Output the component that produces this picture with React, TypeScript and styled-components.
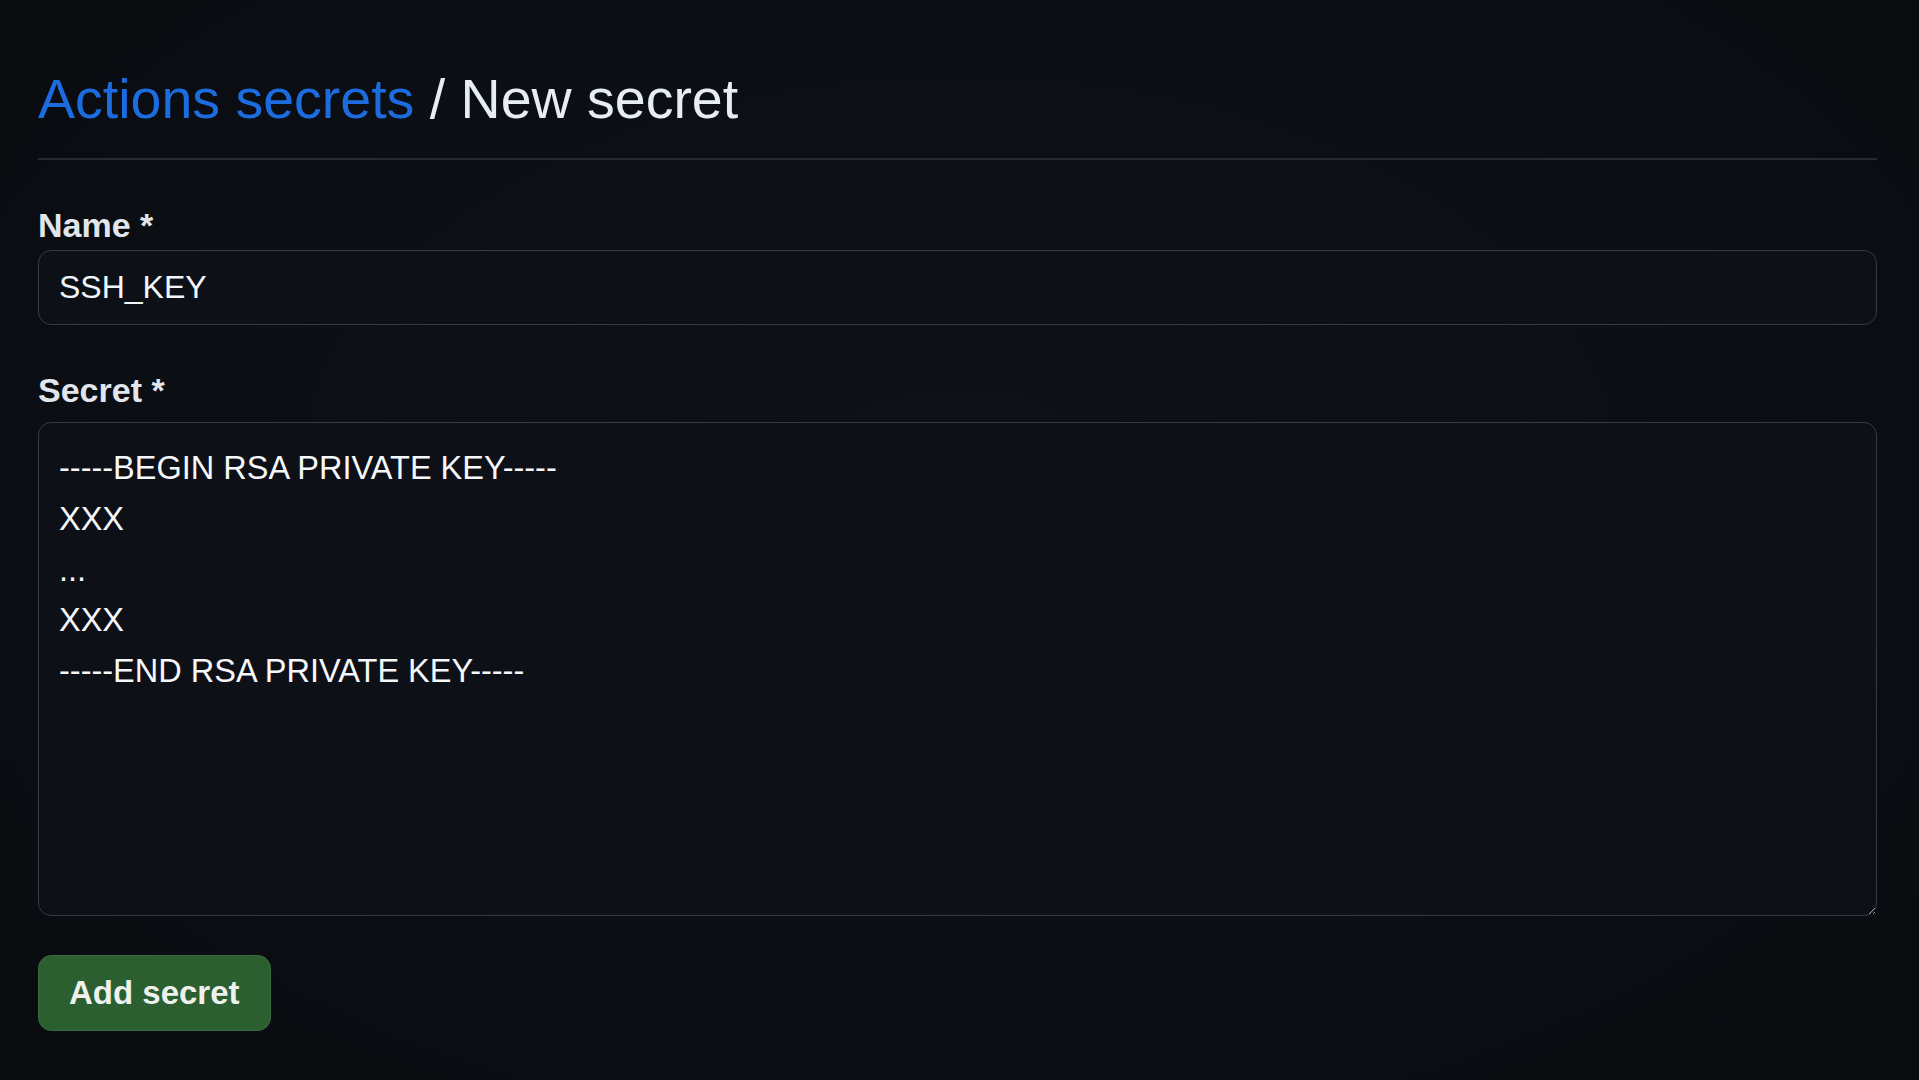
import React from 'react';
import styled, { createGlobalStyle } from 'styled-components';

const GlobalStyle = createGlobalStyle`
  html, body {
    margin: 0;
    padding: 0;
    background: #0b0e13;
  }

  body {
    font-family: "Liberation Sans", Arial, sans-serif;
    color: #e6edf3;
    color-scheme: dark;
  }
`;

const Page = styled.main`
  min-height: 100vh;
  box-sizing: border-box;
  padding: 65px 42px 40px 38px;
  background: radial-gradient(ellipse at 50% 45%, #0e1117 0%, #0b0e13 60%, #090b0f 100%);
`;

const Header = styled.div`
  padding-bottom: 25px;
  border-bottom: 2px solid #262b32;
`;

const Title = styled.h1`
  margin: 0;
  font-size: 55.5px;
  font-weight: 400;
  line-height: 68px;
  color: #e6edf3;
`;

const Crumb = styled.a`
  color: #1c6ce0;
  text-decoration: none;
`;

const Form = styled.form`
  display: flex;
  flex-direction: column;
  align-items: stretch;
`;

const Field = styled.div<{ $top: number }>`
  display: flex;
  flex-direction: column;
  margin-top: ${(p) => p.$top}px;
`;

const Label = styled.label<{ $gap: number }>`
  display: block;
  font-size: 34px;
  font-weight: 700;
  line-height: 40px;
  color: #e1e6ec;
  margin-bottom: ${(p) => p.$gap}px;
`;

const TextInput = styled.input`
  box-sizing: border-box;
  height: 75px;
  width: 100%;
  padding: 0 20px;
  font-family: inherit;
  font-size: 32px;
  color: #f0f6fc;
  background: #0d1016;
  border: 1.5px solid #363b43;
  border-radius: 13px;
  outline: none;
`;

const SecretArea = styled.textarea`
  box-sizing: border-box;
  height: 494px;
  width: 100%;
  padding: 20px 20px;
  font-family: inherit;
  font-size: 32.5px;
  line-height: 50.75px;
  color: #f5f7fa;
  background: #0d1016;
  border: 1.5px solid #363b43;
  border-radius: 13px;
  outline: none;
  resize: vertical;
`;

const SubmitButton = styled.button`
  align-self: flex-start;
  margin-top: 39px;
  height: 76px;
  padding: 0 30px;
  font-family: inherit;
  font-size: 33px;
  font-weight: 700;
  color: #eef1ee;
  background: #2b5f2f;
  border: 1px solid rgba(240, 246, 252, 0.08);
  border-radius: 14px;
  cursor: pointer;
`;

const secretValue = [
  '-----BEGIN RSA PRIVATE KEY-----',
  'XXX',
  '...',
  'XXX',
  '-----END RSA PRIVATE KEY-----',
].join('\n');

const App: React.FC = () => {
  return (
    <>
      <GlobalStyle />
      <Page>
        <Header>
          <Title>
            <Crumb href="#secrets">Actions secrets</Crumb> / New secret
          </Title>
        </Header>

        <Form onSubmit={(e) => e.preventDefault()}>
          <Field $top={45}>
            <Label htmlFor="secret_name" $gap={5}>Name *</Label>
            <TextInput id="secret_name" defaultValue="SSH_KEY" />
          </Field>

          <Field $top={45}>
            <Label htmlFor="secret_value" $gap={12}>Secret *</Label>
            <SecretArea id="secret_value" defaultValue={secretValue} spellCheck={false} />
          </Field>

          <SubmitButton type="submit">Add secret</SubmitButton>
        </Form>
      </Page>
    </>
  );
};

export default App;
